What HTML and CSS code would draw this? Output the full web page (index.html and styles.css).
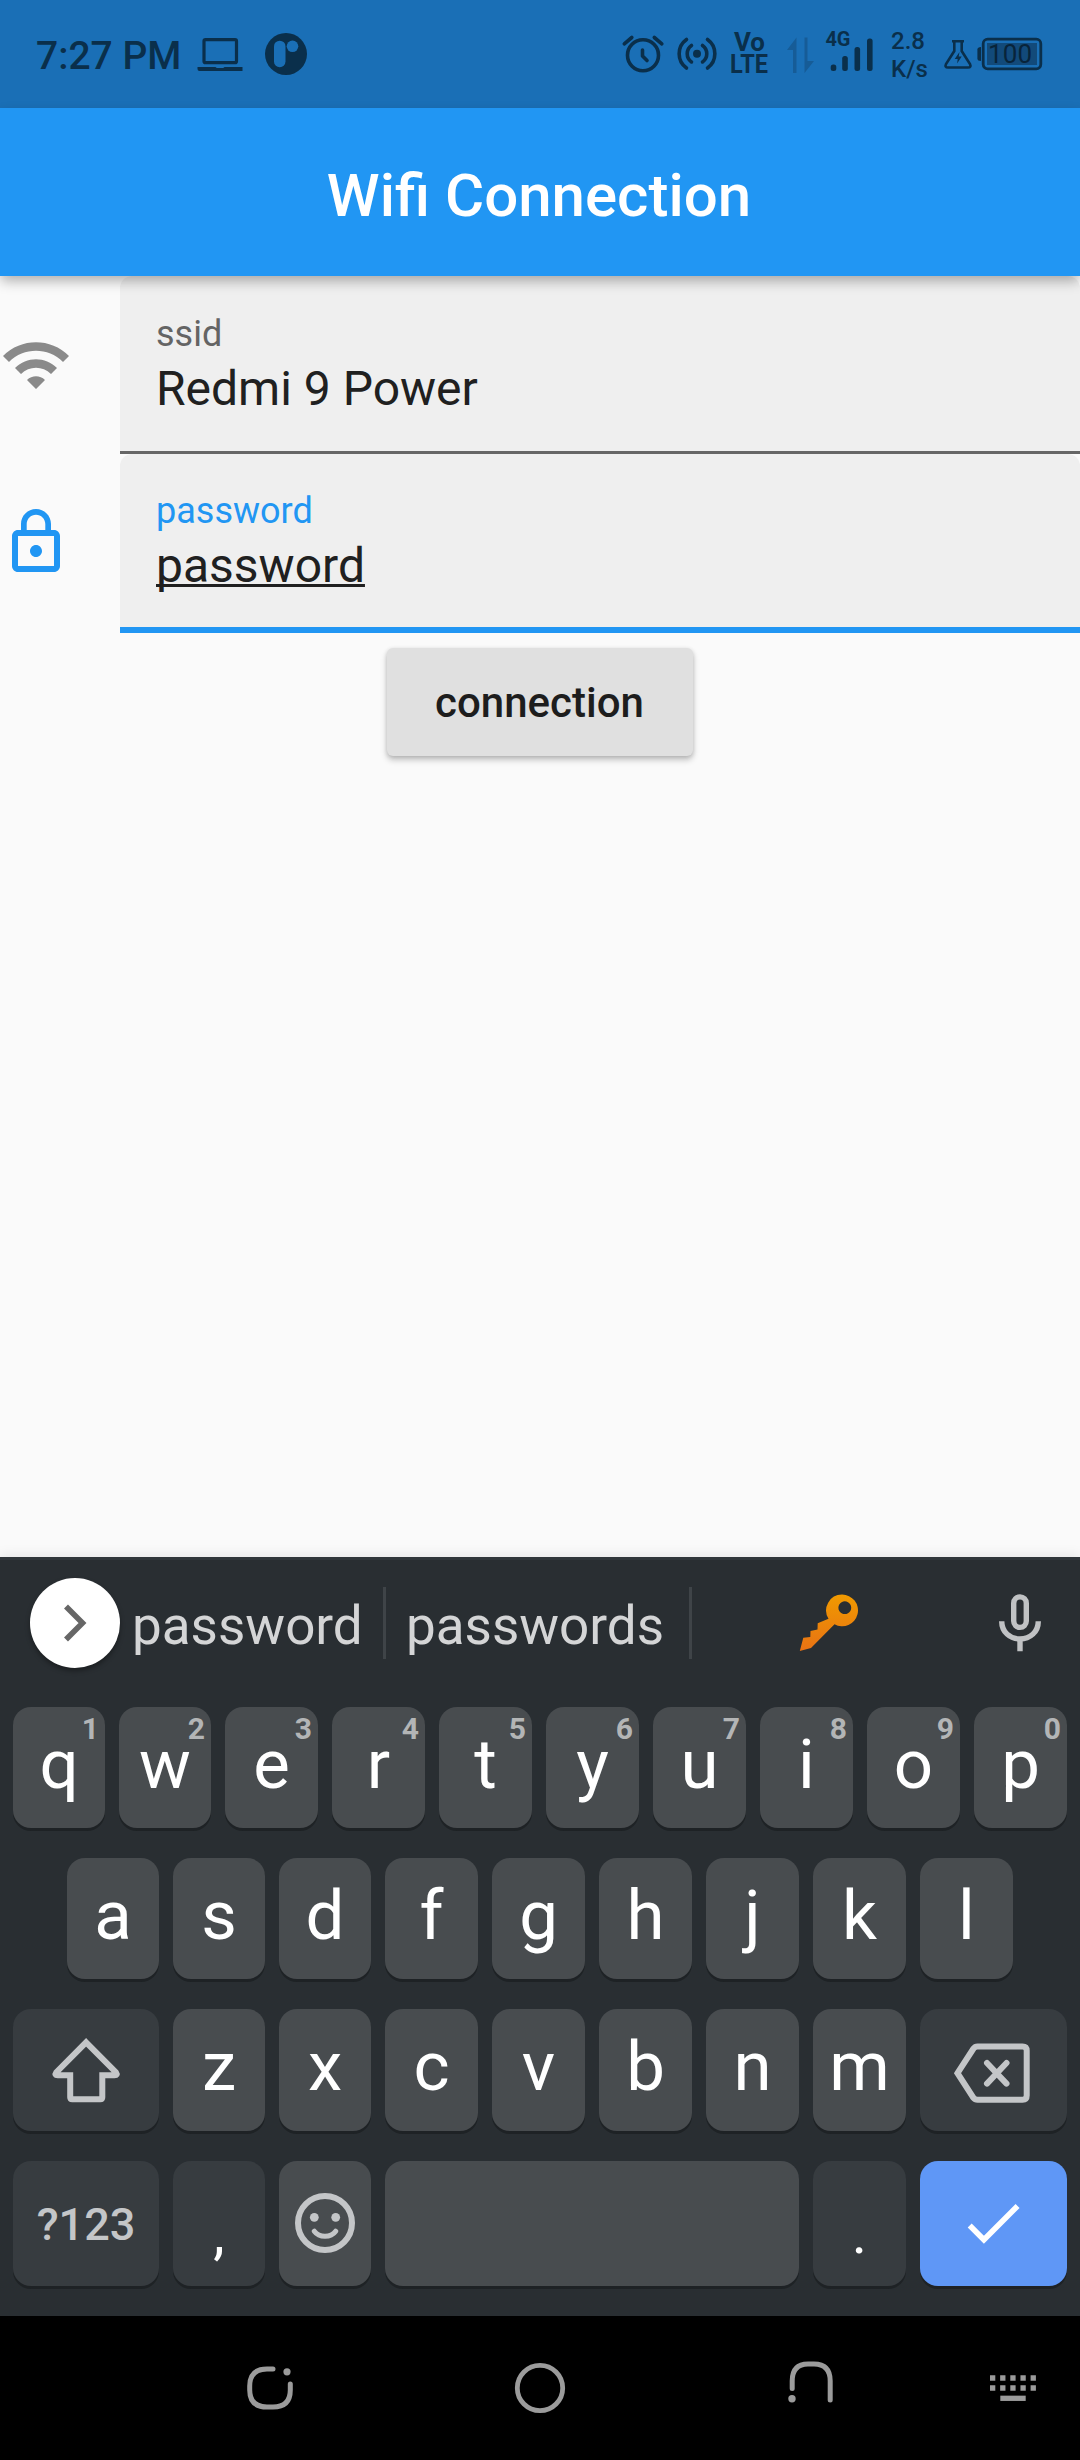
FILE: index.html
```html
<!DOCTYPE html>
<html lang="en">
<head>
<meta charset="utf-8">
<title>Wifi Connection</title>
<link rel="stylesheet" href="styles.css">
</head>
<body>
<div class="screen">
  <div class="status">
    <span class="clock">7:27 PM</span>
    <svg class="ic-laptop" width="46" height="34" viewBox="0 0 46 34"><rect x="7" y="1.7" width="32.500" height="23" rx="1.500" fill="none" stroke="currentColor" stroke-width="3.200"/><path d="M.5 29H18.500q.5 1 2 1H25.500q1.500 0 2-1H45.500V33H2.500q-2 0-2-2z" fill="currentColor"/></svg>
    <svg class="ic-app" width="42" height="42" viewBox="0 0 42 42"><circle cx="21" cy="21" r="21" fill="currentColor"/><rect x="9" y="7.700" width="11.500" height="26.500" rx="5.700" class="cut"/><circle cx="27.500" cy="13.300" r="5.800" class="cut"/></svg>
    <svg class="ic-right" width="266" height="68" viewBox="620 20 266 68" fill="none" stroke="currentColor" stroke-linecap="round">
      <g stroke-width="3.600"><circle cx="643" cy="55.300" r="15.500"/><path d="M642.500 50v6l4.500 4.500M624.300 43.800l7.500-6.300M654.300 37.500l7.500 6.300" stroke-linejoin="round"/></g>
      <circle cx="697" cy="53.700" r="4" fill="currentColor" stroke="none"/>
      <path d="M691.500 45.500a10 10 0 0 0 0 16.400M702.500 45.500a10 10 0 0 1 0 16.400M686.500 39.500a17.500 17.500 0 0 0 0 28.500M707.500 39.500a17.500 17.500 0 0 1 0 28.500" stroke-width="3.600"/>
      <g fill="currentColor" stroke="none" class="net">
        <text x="734" y="51" font-size="25" textLength="31" lengthAdjust="spacingAndGlyphs">Vo</text>
        <text x="730" y="73" font-size="25" textLength="38" lengthAdjust="spacingAndGlyphs">LTE</text>
        <text x="825.500" y="46" font-size="20" textLength="25">4G</text>
      </g>
      <path d="M796.500 37.500V73H793V50H787zM804.500 37.500H807.500V61H814L804.500 73z" class="idle"/>
      <g fill="currentColor" stroke="none"><rect x="830.700" y="64.500" width="5.600" height="6.500" rx="2.500"/><rect x="842.200" y="56" width="5.600" height="15" rx="2.500"/><rect x="854.500" y="47" width="5.600" height="24" rx="2.500"/><rect x="867" y="38.500" width="5.600" height="32.500" rx="2.500"/></g>
    </svg>
    <div class="speed"><span>2.8</span><span>K/s</span></div>
    <svg class="ic-batt" width="100" height="34" viewBox="943 37 100 34" fill="none" stroke="currentColor">
      <path d="M952 41.300h12M954.300 41.500v9.500l-8.300 13q-1.500 3.500 2 3.500h20q3.500 0 2-3.500l-8.300-13v-9.500" stroke-width="2.600"/>
      <path d="M959.500 52l-4.800 7h3l-.6 4.500 4.600-7h-3z" fill="currentColor" stroke="none"/>
      <path d="M981 47v14q-3.600 0-3.600-2.500v-9q0-2.500 3.600-2.500z" fill="currentColor" stroke="none"/>
      <rect x="983.200" y="39.200" width="57.600" height="29.600" rx="4.500" stroke-width="2.800"/>
      <rect x="987" y="43" width="50" height="22" class="level"/>
      <text x="988" y="62.800" font-size="26" class="pct" textLength="44">100</text>
    </svg>
  </div>

  <header class="appbar"><h1>Wifi Connection</h1></header>

  <main class="form">
    <div class="row">
      <svg class="lead wifi" width="72" height="72" viewBox="0 0 24 24"><path fill="currentColor" d="M1 9l2 2c4.970-4.970 13.030-4.970 18 0l2-2C16.930 2.930 7.080 2.930 1 9zm8 8l3 3 3-3c-1.650-1.660-4.340-1.660-6 0zm-4-4l2 2c2.760-2.760 7.240-2.760 10 0l2-2C15.140 9.140 8.870 9.140 5 13z"/></svg>
      <div class="field"><span class="label">ssid</span><span class="value">Redmi 9 Power</span></div>
    </div>
    <div class="row">
      <svg class="lead lock" width="72" height="72" viewBox="0 0 24 24"><path fill="currentColor" d="M12 17c1.100 0 2-.9 2-2s-.9-2-2-2-2 .9-2 2 .9 2 2 2zm6-9h-1V6c0-2.760-2.240-5-5-5S7 3.240 7 6v2H6c-1.100 0-2 .9-2 2v10c0 1.100.9 2 2 2h12c1.100 0 2-.9 2-2V10c0-1.100-.9-2-2-2zM8.900 6c0-1.710 1.390-3.100 3.100-3.100s3.100 1.390 3.100 3.100v2H8.900V6zM18 20H6V10h12v10z"/></svg>
      <div class="field focused"><span class="label">password</span><span class="value"><span class="composing">password</span></span></div>
    </div>
    <button class="connect" type="button">connection</button>
  </main>

  <section class="keyboard">
    <div class="strip">
      <div class="cell first">
        <span class="expand"><svg width="90" height="90" viewBox="0 0 90 90"><path d="M36 28.500L52.500 45 36 61.500" fill="none" stroke="currentColor" stroke-width="5.600"/></svg></span>
        <span class="word">password</span>
      </div>
      <i class="bar"></i>
      <div class="cell second"><span class="word">passwords</span></div>
      <i class="bar"></i>
      <div class="cell">
        <svg width="60" height="58" viewBox="799 1594 60 58">
          <defs><linearGradient id="gold" x1="0" y1="0" x2="0" y2="1"><stop offset="0" stop-color="#f09a00"/><stop offset="1" stop-color="#e87214"/></linearGradient></defs>
          <path fill="url(#gold)" fill-rule="evenodd" d="M842 1594.600A15.800 15.800 0 1 1 834.500 1624.200L811 1648 799.800 1651 803.300 1637.700 810.300 1636.900 810.500 1631 817.500 1629.500 817.700 1623.300 828.500 1618.700A15.800 15.800 0 0 1 842 1594.600zM844.800 1601.300a6.400 6.400 0 1 0 .01 0z"/>
        </svg>
      </div>
      <div class="cell mic"><svg width="42" height="58" viewBox="0 0 42 58" fill="none" stroke="currentColor" stroke-width="5.400"><rect x="14.700" y="2.900" width="12.600" height="30.500" rx="6.300"/><path d="M2.700 27.200C2.700 38 11 45 21 45s18.300-7 18.300-17.800M21 45v12.300"/></svg></div>
    </div>

    <div class="keys r1">
      <div class="key">q<sup>1</sup></div><div class="key">w<sup>2</sup></div><div class="key">e<sup>3</sup></div><div class="key">r<sup>4</sup></div><div class="key">t<sup>5</sup></div><div class="key">y<sup>6</sup></div><div class="key">u<sup>7</sup></div><div class="key">i<sup>8</sup></div><div class="key">o<sup>9</sup></div><div class="key">p<sup>0</sup></div>
    </div>
    <div class="keys r2">
      <div class="key">a</div><div class="key">s</div><div class="key">d</div><div class="key">f</div><div class="key">g</div><div class="key">h</div><div class="key">j</div><div class="key">k</div><div class="key">l</div>
    </div>
    <div class="keys r3">
      <div class="key alt"><svg width="72" height="72" viewBox="50 2033 72 72"><path d="M86.100 2041.300L116 2071.500Q118 2074.300 114.500 2074.300H102.300V2096.300Q102.300 2098.300 100.300 2098.300H72.200Q70.200 2098.300 70.200 2096.300V2074.300H57.700Q54.200 2074.300 56.200 2071.500Z" fill="none" stroke="currentColor" stroke-width="6"/></svg></div>
      <div class="key">z</div><div class="key">x</div><div class="key">c</div><div class="key">v</div><div class="key">b</div><div class="key">n</div><div class="key">m</div>
      <div class="key alt del"><svg width="80" height="66" viewBox="952 2040 80 66" fill="none" stroke="currentColor" stroke-width="6"><path d="M957.500 2073.200L973.500 2048.500Q975 2046.400 977.500 2046.400H1022.500Q1026.700 2046.400 1026.700 2050.600V2095.600Q1026.700 2099.800 1022.500 2099.800H977.500Q975 2099.800 973.500 2097.900Z"/><path d="M987 2063l19.500 20.600M1006.500 2063L987 2083.600" stroke-linecap="round"/></svg></div>
    </div>
    <div class="keys r4">
      <div class="key alt sym">?123</div>
      <div class="key alt punct">,</div>
      <div class="key face"><svg width="60" height="60" viewBox="0 0 60 60" fill="none" stroke="currentColor"><circle cx="30" cy="30" r="27" stroke-width="6"/><g fill="currentColor" stroke="none"><circle cx="19.300" cy="24.300" r="4.400"/><circle cx="40.700" cy="24.300" r="4.400"/></g><path d="M19.300 38.200Q23 43.300 30 43.300T40.700 38.200" stroke-width="5" stroke-linecap="round"/></svg></div>
      <div class="key space"></div>
      <div class="key alt punct">.</div>
      <div class="key go"><svg width="56" height="44" viewBox="966 2201 56 44"><path d="M969.700 2225.500L983.900 2239.700 1017.600 2206" fill="none" stroke="currentColor" stroke-width="5.600"/></svg></div>
    </div>
  </section>

  <nav class="nav">
    <svg width="56" height="56" viewBox="242 2360 56 56" fill="none" stroke="currentColor" stroke-width="5" stroke-linecap="round"><path d="M273 2369H267Q249.700 2369 249.700 2386V2390Q249.700 2407 267 2407H273Q290.300 2407 290.300 2390V2384"/><circle cx="287" cy="2371.800" r="3.600" fill="currentColor" stroke="none"/></svg>
    <svg width="56" height="56" viewBox="0 0 56 56"><circle cx="28" cy="28" r="22.700" fill="none" stroke="currentColor" stroke-width="4.800"/></svg>
    <svg width="56" height="56" viewBox="782 2360 56 56" fill="none" stroke="currentColor" stroke-width="5" stroke-linecap="round"><path d="M792.200 2388.500V2381Q792.200 2364 808 2364H814Q830.200 2364 830.200 2381V2400"/><circle cx="792" cy="2398.700" r="3.700" fill="currentColor" stroke="none"/></svg>
    <svg class="kbd" width="46" height="27" viewBox="0 0 46 27"><path d="M0 3h46M0 13h46" stroke="currentColor" stroke-width="5.300" stroke-dasharray="5.300 4.850"/><path d="M10.300 23.300H35.700" stroke="currentColor" stroke-width="5.300"/></svg>
  </nav>
</div>
</body>
</html>
```
FILE: styles.css
```css
* { box-sizing: border-box; }
body { margin: 0; background: #fafafa; font-family: Roboto, "Liberation Sans", sans-serif; }
svg { display: block; flex: none; }
.screen { width: 1080px; height: 2460px; display: flex; flex-direction: column; overflow: hidden; }

.status { height: 108px; background: #1a6fb6; color: #0a2f4b; display: flex; align-items: flex-start; padding-left: 36px; }
.clock { width: 160px; font-size: 39px; font-weight: 500; line-height: 48px; padding-top: 32px; white-space: nowrap; }
.ic-laptop { margin: 38px 0 0 1px; }
.ic-app { margin: 33px 0 0 22px; }
.cut { fill: #1a6fb6; }
.ic-right { margin: 20px 0 0 313px; }
.net { font-weight: 700; }
.idle { fill: #165c97; stroke: none; }
.speed { width: 52px; margin: 27px 0 0 5px; font-size: 24px; font-weight: 500; line-height: 28px; display: flex; flex-direction: column; }
.ic-batt { margin-top: 37px; }
.level { fill: #124a7a; stroke: none; }
.pct { font-weight: 400; fill: #08243a; stroke: none; }

.appbar { position: relative; z-index: 1; height: 168px; background: #2196f3; display: flex; align-items: center; justify-content: center; box-shadow: 0 6px 12px -1px rgba(0, 0, 0, .3); }
.appbar h1 { margin: 7px 2px 0 0; color: #fff; font-size: 60px; line-height: 70px; font-weight: 500; white-space: nowrap; }

.form { flex: 1; display: flex; flex-direction: column; align-items: stretch; }
.row { display: flex; height: 178px; }
.row + .row { height: 179px; }
.lead { margin-right: 48px; }
.wifi { margin-top: 53px; color: #8a8a8a; }
.lock { margin-top: 52px; color: #2196f3; }
.field { flex: 1; background: #efefef; border-radius: 12px 12px 0 0; border-bottom: 3px solid #666; padding: 37px 36px 0; display: flex; flex-direction: column; }
.label { font-size: 36px; line-height: 42px; color: #646464; }
.value { font-size: 48px; line-height: 56px; margin-top: 6px; color: #202020; }
.focused { border-bottom: 6px solid #2196f3; padding-top: 36px; }
.focused .label { color: #2196f3; }
.composing { text-decoration: underline; text-decoration-thickness: 3px; text-underline-offset: 2px; text-decoration-skip-ink: none; }
.connect { align-self: center; width: 306px; height: 108px; margin-top: 15px; padding: 2px 1px 0 0; border: 0; border-radius: 6px; background: #e0e0e0; color: #1d1d1d; font: 500 42px/50px Roboto, "Liberation Sans", sans-serif; box-shadow: 0 4px 6px rgba(0, 0, 0, .22), 0 1px 4px rgba(0, 0, 0, .12); }

.keyboard { height: 759px; background: #292e32; border-top: 3px solid #31373b; box-shadow: 0 -2px 12px rgba(0, 0, 0, .08); color: #fff; }
.strip { height: 147px; display: grid; grid-template-columns: 383px 3px 303px 3px 274px 114px; padding-bottom: 21px; align-items: center; font-size: 53px; line-height: 62px; color: #d4d5d6; }
.cell { display: flex; align-items: center; justify-content: center; }
.cell.first { justify-content: flex-start; gap: 12px; }
.cell.second { padding-right: 5px; }
.cell.mic { color: #c0c2c4; justify-content: flex-start; padding-left: 33px; }
.word { padding-top: 6px; }
.expand { margin-left: 30px; border-radius: 50%; background: #fff; color: #666; box-shadow: 0 3px 5px rgba(0, 0, 0, .35); }
.bar { height: 72px; background: #3f4448; }

.keys { display: grid; gap: 14px; padding: 0 13px; font-size: 69px; line-height: 80px; }
.r1 { grid-template-columns: 92px 92px repeat(8, 93px); height: 121px; }
.r2 { grid-template-columns: repeat(3, 92px) repeat(6, 93px); height: 121px; margin-top: 30px; padding: 0 67px; }
.r3 { grid-template-columns: 146px 92px 92px repeat(5, 93px) 147px; height: 122px; margin-top: 30px; }
.r4 { grid-template-columns: 146px 92px 92px 1fr 93px 147px; height: 125px; margin-top: 30px; }
.key { position: relative; display: flex; align-items: center; justify-content: center; padding-bottom: 6px; border-radius: 18px; background: #484c4f; box-shadow: 0 3px 0 #1e2225; }
.key sup { position: absolute; top: 4px; right: 6px; font-size: 30px; line-height: 36px; font-weight: 700; color: #b3b5b6; }
.alt { background: #373c40; }
.alt svg, .face { color: #c4c6c8; }
.alt svg { margin-top: 5px; }
.del svg { margin: 11px 0 0 -3px; }
.face { padding-bottom: 1px; }
.sym { font-size: 45px; font-weight: 500; color: #c4c6c8; padding: 2px 0 0; }
.punct { padding: 19px 0 0; font-size: 58px; }
.go { background: #5f97f6; padding-bottom: 1px; }

.nav { height: 144px; background: #000; color: #9b9b9b; display: flex; align-items: center; padding-left: 242px; gap: 214px; }
.nav .kbd { margin-left: -62px; }
```
